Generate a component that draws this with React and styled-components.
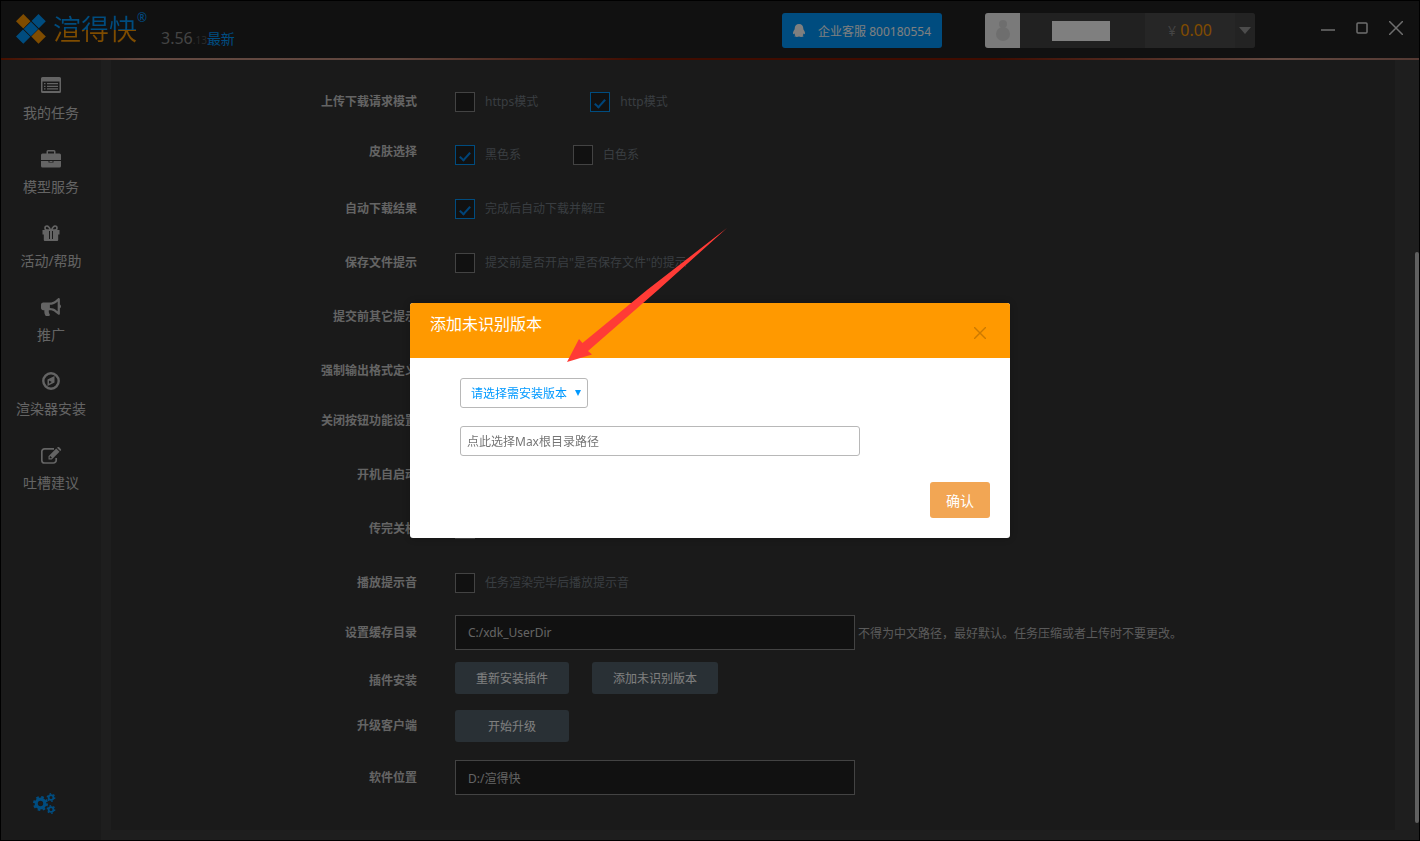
import React, { useState } from 'react';
import styled, { createGlobalStyle } from 'styled-components';
import { FaBullhorn } from 'react-icons/fa';

const GlobalStyle = createGlobalStyle`
*, *::after {
    box-sizing: border-box;
}
body {
    margin: 0;
    background: #000;
}
body, button, input, select {
    font-family: "Noto Sans", "Noto Sans CJK SC", sans-serif;
    font-size: 12px;
}
button {
    border: 0;
    padding: 0;
    cursor: pointer;
}
a {
    text-decoration: none;
}
`;

const menu = [
    { name: '我的任务', icon: <ListIcon /> },
    { name: '模型服务', icon: <CaseIcon /> },
    { name: '活动/帮助', icon: <GiftIcon /> },
    { name: '推广', icon: <FaBullhorn size={20} /> },
    { name: '渲染器安装', icon: <CompassIcon /> },
    { name: '吐槽建议', icon: <EditIcon /> },
];

function ListIcon() {
    return (
        <svg width="20" height="16" viewBox="0 0 20 16" fill="currentColor" fillRule="evenodd">
            <path d="M1.5 0h17A1.5 1.5 0 0 1 20 1.500v13a1.500 1.500 0 0 1-1.500 1.500h-17A1.500 1.500 0 0 1 0 14.500v-13A1.500 1.500 0 0 1 1.500 0zM1.500 4.500v9.500h17V4.500z" />
            <path d="M3 6h1.500v1.300H3zM6 6h11v1.300H6zM3 8.700h1.500V10H3zM6 8.700h11V10H6zM3 11.300h1.500v1.300H3zM6 11.300h11v1.300H6z" />
        </svg>
    );
}

function CaseIcon() {
    return (
        <svg width="20" height="18" viewBox="0 0 20 18" fill="currentColor" fillRule="evenodd">
            <path d="M5.500 3.500V1.500A1.500 1.500 0 0 1 7 0h6a1.500 1.500 0 0 1 1.500 1.500v2h4A1.500 1.500 0 0 1 20 5v5H0V5a1.500 1.500 0 0 1 1.500-1.500zM7 1.500v2h6v-2z" />
            <path d="M0 11h7.500v1.500h5V11H20v5a1.500 1.500 0 0 1-1.500 1.500h-17A1.500 1.500 0 0 1 0 16zM8.500 11h3v1h-3z" />
        </svg>
    );
}

function GiftIcon() {
    return (
        <svg width="18" height="16" viewBox="0 0 18 16">
            <path d="M8.500 5C7.500 2.500 6.500 1 5 1a2 2 0 0 0 0 4zM9.500 5c1-2.500 2-4 3.500-4a2 2 0 0 1 0 4z" fill="none" stroke="currentColor" strokeWidth="1.600" />
            <path d="M.5 5h17v4.500h-1.300V15a1 1 0 0 1-1 1H2.800a1 1 0 0 1-1-1V9.500H.5zM7 6v8h1V6zM10 6v8h1V6z" fill="currentColor" fillRule="evenodd" />
        </svg>
    );
}

function CompassIcon() {
    return (
        <svg width="18" height="18" viewBox="0 0 18 18">
            <circle cx="9" cy="9" r="7.700" fill="none" stroke="currentColor" strokeWidth="2.400" />
            <path d="M12.500 4v6.600L5.500 14V7.500zM7 8.500v3.200L9.800 10z" fill="currentColor" fillRule="evenodd" />
        </svg>
    );
}

function EditIcon() {
    return (
        <svg width="21" height="17" viewBox="0 0 21 17">
            <path d="M13 1.800H3.600A2.800 2.800 0 0 0 .8 4.600v8.600A2.800 2.800 0 0 0 3.600 16h8.800a2.800 2.800 0 0 0 2.800-2.800V11" fill="none" stroke="currentColor" strokeWidth="1.700" />
            <path d="M7.500 9.200l7.700-7.700 3.300 3.300-7.700 7.700H7.500zM16 .8l.6-.5a1.200 1.200 0 0 1 1.600 0l1.600 1.600a1.200 1.200 0 0 1 0 1.600l-.6.600zM8.700 9.700v1.600h1.600l.6-.6-1.600-1.600z" fill="currentColor" fillRule="evenodd" />
        </svg>
    );
}

function GearsIcon() {
    return (
        <svg width="23" height="21" viewBox="0 0 23 21" fill="none" stroke="currentColor">
            <circle cx="7.500" cy="10.500" r="4.300" strokeWidth="3.200" />
            <circle cx="7.500" cy="10.500" r="6.500" strokeWidth="2" strokeDasharray="2.600 2.500" />
            <circle cx="18" cy="4.500" r="2.400" strokeWidth="1.800" />
            <circle cx="18" cy="4.500" r="3.700" strokeWidth="1.400" strokeDasharray="1.600 2.270" />
            <circle cx="18" cy="16.500" r="2.400" strokeWidth="1.800" />
            <circle cx="18" cy="16.500" r="3.700" strokeWidth="1.400" strokeDasharray="1.600 2.270" />
        </svg>
    );
}

function Logo() {
    return (
        <svg width="30" height="30" viewBox="0 0 30 30">
            <path d="M7.300 0l7.200 7.200-7.200 7.300L0 7.200z" fill="#ff9900" />
            <path d="M22.500 15.300l7.300 7.200-7.300 7.300-7.200-7.300z" fill="#ff9900" />
            <path d="M22.500 0l7.300 7.200-7 7-7.200-7.200zM15 7.700l7.200 7.200-7.300 7.300-7.200-7.300zM7 15.500l7.300 7.300-7 7L0 22.500z" fill="#0099ff" />
        </svg>
    );
}

function Check({ text, on }) {
    const [checked, setChecked] = useState(Boolean(on));
    return (
        <CheckLabel>
            <input type="checkbox" checked={checked} onChange={() => setChecked(!checked)} />
            {text}
        </CheckLabel>
    );
}

function Header() {
    return (
        <HeaderStyled>
            <Brand>
                <Logo />
                <span>渲得快</span>
            </Brand>
            <Reg>®</Reg>
            <Version>
                3.56<small>.13</small><a href="#version">最新</a>
            </Version>
            <Service type="button">
                <svg width="12" height="13" viewBox="0 0 12 13" fill="currentColor">
                    <path d="M6 0c2.700 0 4.300 1.900 4.300 4.500 0 1 .7 1.700 1.300 3 .6 1.300.4 2.600 0 2.700-.4 0-.8-.6-1-.6-.1.700-.5 1.200-.9 1.600.6.300.9.700.8 1.100-.1.700-3.600.8-4.500.2-.9.600-4.400.5-4.500-.2-.1-.4.200-.8.800-1.100-.4-.4-.8-.9-.9-1.600-.2 0-.6.600-1 .6-.4-.1-.6-1.400 0-2.700.6-1.300 1.300-2 1.300-3C1.700 1.900 3.300 0 6 0z" />
                </svg>
                企业客服 800180554
            </Service>
            <Account>
                <Avatar>
                    <svg width="16" height="21" viewBox="0 0 16 21" fill="#dcdcdc">
                        <circle cx="8" cy="4" r="4" />
                        <ellipse cx="8" cy="14" rx="7" ry="7" />
                    </svg>
                </Avatar>
                <UserName><span /></UserName>
                <Money><i>¥</i> 0.00</Money>
                <Drop type="button" aria-label="展开">
                    <svg width="12" height="7" viewBox="0 0 12 7"><path d="M0 0h12L6 7z" fill="#999" /></svg>
                </Drop>
            </Account>
            <WinButtons>
                <button type="button" aria-label="最小化">
                    <svg width="14" height="14"><path d="M0 9h14" /></svg>
                </button>
                <button type="button" aria-label="最大化">
                    <svg width="14" height="14"><rect x="2" y="2" width="10" height="10" rx="1" /></svg>
                </button>
                <button type="button" aria-label="关闭">
                    <svg width="14" height="14"><path d="M0 0l14 14M14 0L0 14" /></svg>
                </button>
            </WinButtons>
        </HeaderStyled>
    );
}

function Settings() {
    return (
        <Panel>
            <Row>
                <RowLabel as="span">上传下载请求模式</RowLabel>
                <Controls $gap={52}><Check text="https模式" /><Check text="http模式" on /></Controls>
            </Row>
            <Row $space={30} $height={23}>
                <RowLabel as="span" $align="start">皮肤选择</RowLabel>
                <Controls $gap={52} $align="end"><Check text="黑色系" on /><Check text="白色系" /></Controls>
            </Row>
            <Row $space={34}>
                <RowLabel as="span">自动下载结果</RowLabel>
                <Controls><Check text="完成后自动下载并解压" on /></Controls>
            </Row>
            <Row $space={34}>
                <RowLabel as="span">保存文件提示</RowLabel>
                <Controls><Check text={'提交前是否开启"是否保存文件"的提示'} /></Controls>
            </Row>
            <Row $space={34}>
                <RowLabel as="span">提交前其它提示</RowLabel>
                <Controls><Check text="" /></Controls>
            </Row>
            <Row $space={34}>
                <RowLabel as="span">强制输出格式定义</RowLabel>
                <Controls><Check text="" /></Controls>
            </Row>
            <Row $space={30}>
                <RowLabel as="span">关闭按钮功能设置</RowLabel>
                <Controls><Check text="" /></Controls>
            </Row>
            <Row $space={34}>
                <RowLabel as="span">开机自启动</RowLabel>
                <Controls><Check text="" /></Controls>
            </Row>
            <Row $space={34}>
                <RowLabel as="span">传完关机</RowLabel>
                <Controls><Check text="" /></Controls>
            </Row>
            <Row $space={34}>
                <RowLabel as="span">播放提示音</RowLabel>
                <Controls><Check text="任务渲染完毕后播放提示音" /></Controls>
            </Row>
            <Row $space={22}>
                <RowLabel htmlFor="cache">设置缓存目录</RowLabel>
                <Controls $gap={3}>
                    <PathInput id="cache" defaultValue="C:/xdk_UserDir" />
                    <Note>不得为中文路径，最好默认。任务压缩或者上传时不要更改。</Note>
                </Controls>
            </Row>
            <Row $space={12} $height={38}>
                <RowLabel as="span">插件安装</RowLabel>
                <Controls $gap={23} $align="start">
                    <GrayButton type="button">重新安装插件</GrayButton>
                    <GrayButton type="button">添加未识别版本</GrayButton>
                </Controls>
            </Row>
            <Row $space={10}>
                <RowLabel as="span">升级客户端</RowLabel>
                <Controls><GrayButton type="button">开始升级</GrayButton></Controls>
            </Row>
            <Row $space={18}>
                <RowLabel htmlFor="place">软件位置</RowLabel>
                <Controls><PathInput id="place" defaultValue="D:/渲得快" /></Controls>
            </Row>
        </Panel>
    );
}

function VersionDialog() {
    return (
        <Dialog role="dialog" aria-label="添加未识别版本">
            <DialogHead>
                <h3>添加未识别版本</h3>
                <button type="button" aria-label="关闭">
                    <svg width="12" height="12"><path d="M0 0l12 12M12 0L0 12" stroke="#cc7a00" strokeWidth="1.400" /></svg>
                </button>
            </DialogHead>
            <DialogBody>
                <SelectBox>
                    <select aria-label="版本">
                        <option>请选择需安装版本</option>
                    </select>
                </SelectBox>
                <DirInput aria-label="Max根目录路径" placeholder="点此选择Max根目录路径" />
                <Confirm type="button">确认</Confirm>
            </DialogBody>
            <Arrow viewBox="567 228 160 134">
                <path d="M567 362l12-23 3.500 4 64.500-53 80-62-69 62-70 61 4 3.500z" fill="#ff3b36" />
            </Arrow>
        </Dialog>
    );
}

function App() {
    return (
        <Window>
            <GlobalStyle />
            <Header />
            <Content>
                <Sidebar>
                    {menu.map((item) => (
                        <MenuItem href="#menu" key={item.name}>
                            <span>{item.icon}</span>
                            {item.name}
                        </MenuItem>
                    ))}
                    <Setup href="#setup" aria-label="设置"><GearsIcon /></Setup>
                </Sidebar>
                <Settings />
                <ScrollTrack><div /></ScrollTrack>
            </Content>
            <Mask>
                <VersionDialog />
            </Mask>
        </Window>
    );
}

const Window = styled.div`
min-height: 100vh;
display: flex;
flex-direction: column;
border: 1px solid #000;
background: #3c3c3c;
`;

const HeaderStyled = styled.header`
display: flex;
align-items: center;
height: 59px;
padding: 0 16px 0 15px;
background: linear-gradient(90deg, #8c2000, #c89484 10%, #c08c7c 28%, #801800 45%, #801800 70%, #c89484 90%, #a87468) bottom / 100% 2px no-repeat #222;
`;

const Brand = styled.div`
display: flex;
align-items: center;
gap: 7px;
padding-bottom: 4px;
span{
    font-size: 28px;
    font-weight: 350;
    line-height: 36px;
    color: transparent;
    background: linear-gradient(#0099ff 52%, #ff9900 52%);
    background-clip: text;
    -webkit-background-clip: text;
}
`;

const Reg = styled.sup`
align-self: flex-start;
padding-top: 9px;
font-size: 12px;
line-height: 16px;
color: #0099ff;
`;

const Version = styled.div`
display: flex;
align-items: baseline;
align-self: flex-end;
margin-left: 14px;
padding-bottom: 8px;
font-size: 16px;
line-height: 24px;
color: #888;
small{
    font-size: 10px;
    color: #555;
}
a{
    font-size: 14px;
    color: #0099ff;
}
`;

const Service = styled.button`
display: flex;
align-items: center;
gap: 13px;
height: 35px;
margin-left: auto;
padding: 0 11px 0 11px;
border-radius: 3px;
background: #0099ff;
color: #fff;
`;

const Account = styled.div`
display: flex;
height: 35px;
margin-left: 43px;
border-radius: 3px;
overflow: hidden;
background: #424242;
`;

const Avatar = styled.div`
display: flex;
align-items: center;
justify-content: center;
width: 35px;
background: #f4f4f4;
`;

const UserName = styled.div`
display: flex;
align-items: center;
justify-content: flex-end;
width: 125px;
padding-right: 35px;
span{
    width: 58px;
    height: 20px;
    background: #fff;
}
`;

const Money = styled.div`
width: 90px;
padding-right: 23px;
background: #4c4c4c;
color: #ff9900;
font-size: 16px;
line-height: 35px;
text-align: right;
i{
    font-style: normal;
    font-size: 14px;
    color: #888;
}
`;

const Drop = styled.button`
display: flex;
align-items: center;
justify-content: center;
width: 20px;
background: #464646;
`;

const WinButtons = styled.div`
display: flex;
gap: 20px;
margin-left: 66px;
padding-bottom: 5px;
button{
    display: flex;
    background: none;
}
svg{
    fill: none;
    stroke: #ddd;
    stroke-width: 1.500;
}
`;

const Content = styled.div`
flex: 1;
display: flex;
`;

const Sidebar = styled.nav`
display: flex;
flex-direction: column;
width: 100px;
background: #343434;
`;

const MenuItem = styled.a`
display: flex;
flex-direction: column;
align-items: center;
gap: 8px;
padding: 15px 0 11px;
font-size: 14px;
line-height: 20px;
color: #c8c8c8;
span{
    display: flex;
    align-items: center;
    height: 20px;
}
`;

const Setup = styled.a`
display: flex;
margin-top: auto;
padding: 0 0 26px 32px;
color: #0099ff;
`;

const Panel = styled.main`
flex: 1;
margin: 0 20px 10px 10px;
padding: 32px 0 35px;
background: #343434;
`;

const Row = styled.div`
display: flex;
align-items: center;
gap: 38px;
min-height: ${(props) => props.$height || 20}px;
margin-top: ${(props) => props.$space || 0}px;
`;

const RowLabel = styled.label`
align-self: ${(props) => props.$align || 'center'};
width: 306px;
color: #c8c8c8;
font-weight: 700;
line-height: 20px;
text-align: right;
`;

const Controls = styled.div`
display: flex;
align-items: center;
align-self: ${(props) => props.$align || 'center'};
gap: ${(props) => props.$gap || 0}px;
`;

const CheckLabel = styled.label`
display: flex;
align-items: center;
gap: 10px;
color: #727b82;
line-height: 20px;
input{
    appearance: none;
    display: flex;
    justify-content: center;
    width: 20px;
    height: 20px;
    margin: 0;
    border: 1px solid #868686;
    background: #222;
}
input:checked{
    border-color: #0099ff;
}
input:checked::after{
    content: "";
    width: 6px;
    height: 11px;
    margin-top: 4px;
    border: solid #0088f0;
    border-width: 0 2px 2px 0;
    transform: rotate(42deg);
}
`;

const PathInput = styled.input`
width: 400px;
height: 35px;
padding: 0 12px;
border: 1px solid #868686;
background: #222;
color: #c8c8c8;
`;

const Note = styled.span`
color: #b4b4b4;
`;

const GrayButton = styled.button`
min-width: 114px;
height: 32px;
padding: 0 21px;
border-radius: 3px;
background: #52606a;
color: #fff;
`;

const ScrollTrack = styled.div`
display: flex;
width: 4px;
padding: 192px 0 17px;
div{
    width: 4px;
    border-radius: 2px;
    background: #c0c0c0;
}
`;

/* dims the window behind the dialog */
const Mask = styled.div`
position: fixed;
inset: 0;
display: flex;
align-items: center;
justify-content: center;
background: rgba(0, 0, 0, .5);
`;

const Dialog = styled.section`
position: relative;
width: 600px;
border-radius: 3px;
background: #fff;
box-shadow: 0 0 10px rgba(0, 0, 0, .2);
`;

const DialogHead = styled.div`
display: flex;
justify-content: space-between;
height: 55px;
padding: 11px 20px 15px;
border-radius: 3px 3px 0 0;
background: #ff9900;
h3{
    margin: 0;
    color: #fff;
    font-size: 16px;
    font-weight: 400;
    line-height: 20px;
}
button{
    display: flex;
    align-items: center;
    justify-content: center;
    align-self: flex-end;
    width: 20px;
    height: 20px;
    background: none;
}
`;

const DialogBody = styled.div`
display: flex;
flex-direction: column;
align-items: flex-start;
padding: 20px 20px 20px 50px;
`;

const SelectBox = styled.div`
position: relative;
select{
    appearance: none;
    width: 128px;
    height: 30px;
    padding: 0 20px 0 10px;
    border: 1px solid #b8b8b8;
    border-radius: 3px;
    background: #fff;
    color: #0099ff;
}
&::after{
    content: "";
    position: absolute;
    top: 12px;
    right: 7px;
    border: solid transparent;
    border-width: 6px 3px 0;
    border-top-color: #0099ff;
    pointer-events: none;
}
`;

const DirInput = styled.input`
width: 400px;
height: 30px;
margin-top: 18px;
padding: 0 6px;
border: 1px solid #b8b8b8;
border-radius: 3px;
&::placeholder{
    color: #757575;
}
`;

const Confirm = styled.button`
align-self: flex-end;
width: 60px;
height: 36px;
margin-top: 26px;
border-radius: 3px;
background: #f2a654;
color: #fff;
font-size: 14px;
`;

const Arrow = styled.svg`
position: absolute;
left: 157px;
top: -75px;
width: 160px;
height: 134px;
pointer-events: none;
`;

export default App;
